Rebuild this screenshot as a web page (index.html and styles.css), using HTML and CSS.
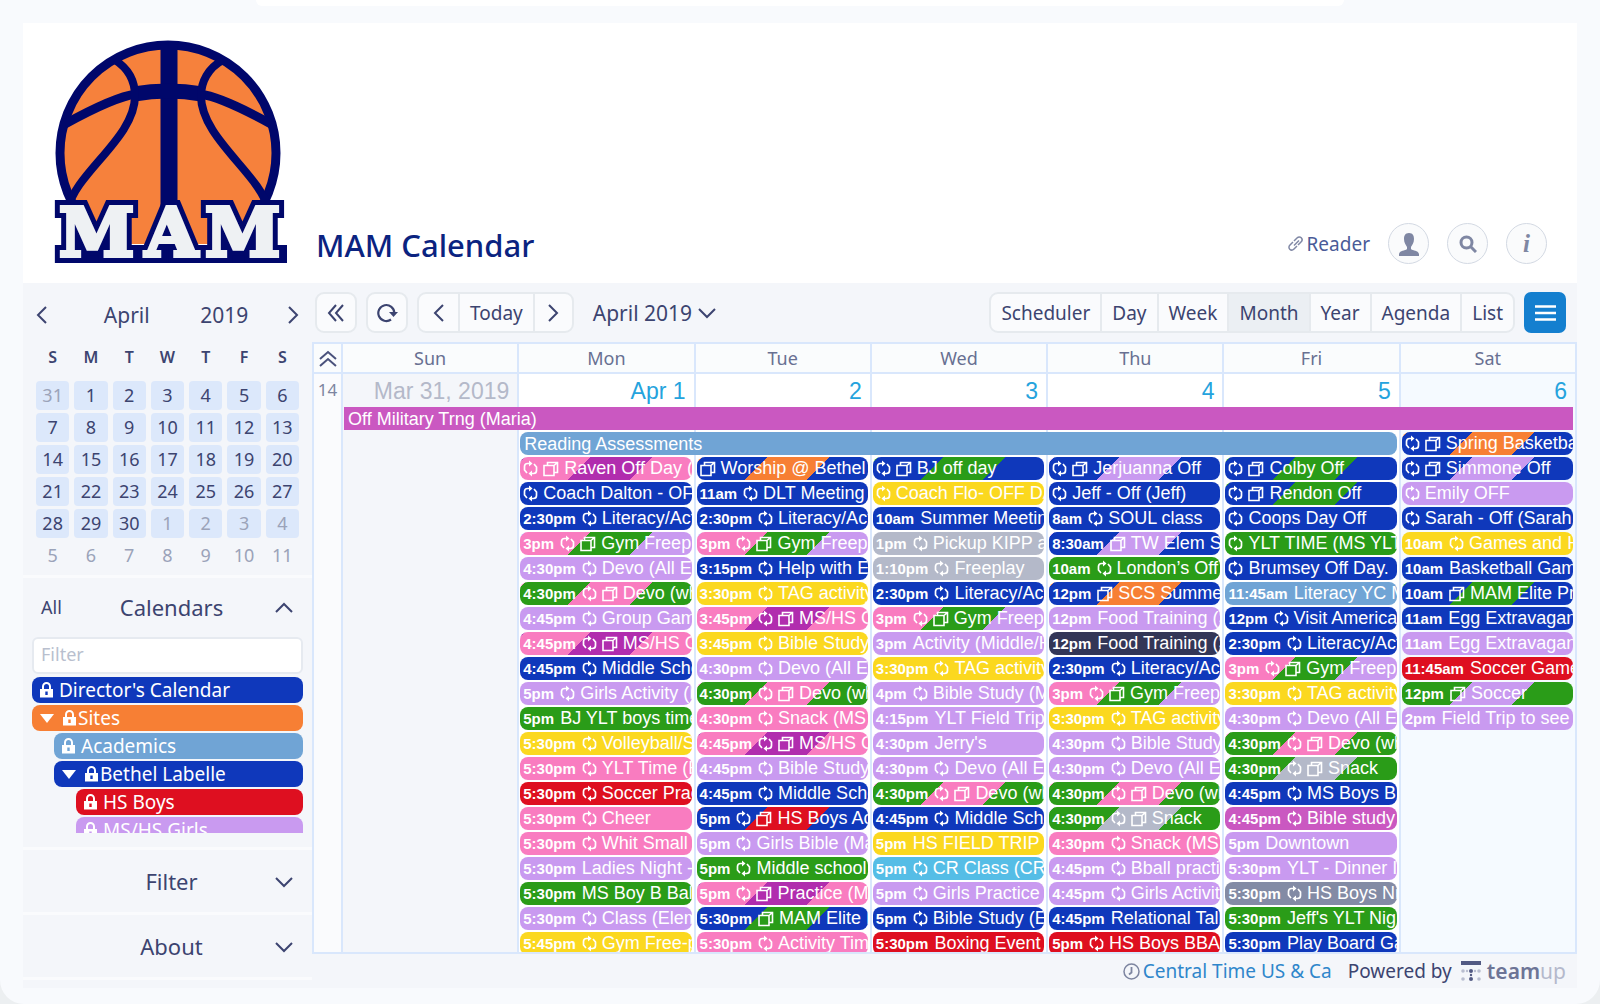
FILE: index.html
```html
<!DOCTYPE html>
<html lang="en">
<head>
  <meta charset="UTF-8" />
  <meta name="viewport" content="width=device-width, initial-scale=1.0"/>
  <title>MAM Calendar</title>
  <link rel="stylesheet" href="styles.css">
</head>
<body>
  <svg class="sprite" width="0" height="0" aria-hidden="true">
    <symbol id="left" viewBox="0 0 12 20"><path d="M10 2 2 10l8 8"/></symbol>
    <symbol id="right" viewBox="0 0 12 20"><path d="m2 2 8 8-8 8"/></symbol>
    <symbol id="down" viewBox="0 0 18 12"><path d="m1 2 8 8 8-8"/></symbol>
    <symbol id="up" viewBox="0 0 18 12"><path d="m1 10 8-8 8 8"/></symbol>
    <symbol id="lock" viewBox="0 0 13 16"><path fill="currentColor" stroke="none" fill-rule="evenodd" d="M0 7h13v8.5H0zM5.300 9.500v3.500h2.400v-3.500z"/><path d="M3 8V4.500a3.500 3.500 0 0 1 7 0V8" stroke-width="2"/></symbol>
    <symbol id="repeat" viewBox="0 0 15 17"><path d="M6.500 3.500H4.500Q1.500 3.500 1.500 6.500v3.500l2.500 3M8.500 13.500h2Q13.500 13.500 13.500 10.500V7L11 4" stroke-width="1.700"/><path fill="currentColor" stroke="none" d="M6 .5v6L9.500 3.500zM9 10.500v6l-3.500-3z"/></symbol>
    <symbol id="copy" viewBox="0 0 16 16"><path d="M1 4.500h10v10H1zM4.500 4.500v-3h10v10H11M11 4.500l3.500-3" stroke-width="1.600"/></symbol>
  </svg>

  <div class="strip"></div>
  <div class="panel">
    <header class="header">
      <svg class="logo" viewBox="0 0 234 226" role="img" aria-label="MAM">
        <defs>
          <clipPath id="ball"><path d="M0 0h234v206H0z"/></clipPath>
          <text id="mam" y="218"><tspan x="5">M</tspan><tspan x="91">A</tspan><tspan x="151">M</tspan></text>
        </defs>
        <g clip-path="url(#ball)" stroke="#00076b" fill="none">
          <circle cx="114" cy="115" r="108" fill="#f6813c" stroke-width="9"/>
          <path d="M115 6v170" stroke-width="17"/>
          <path d="M11 86Q60 59 82 56q32-6 64 0 22 3 71 30" stroke-width="9"/>
          <path d="M80 56q34-6 68 0" stroke-width="15"/>
          <path d="M61 22c14 9 20 22 20 36 0 42-60 77-67 113M169 22c-15 8-22 22-22 36 0 42 60 79 67 113" stroke-width="8"/>
        </g>
        <path d="M1 207h232v18H1z" fill="#00076b"/>
        <use class="logo-text logo-outline" href="#mam"/>
        <use class="logo-text" href="#mam"/>
      </svg>
      <h1>MAM Calendar</h1>
      <a class="reader" href="#"><svg class="icon" width="17" height="17" viewBox="0 0 17 17"><path d="m7 10.500 5-5M6 7 3 10c-3 3 1 7 4 4l3-3M7 6l3-3c3-3 7 1 4 4l-3 3" stroke-width="1.500"/></svg>Reader</a>
      <button class="round" aria-label="Account"><svg width="22" height="24" viewBox="0 0 22 24"><path fill="currentColor" d="M11 1c4 0 5 3 5 6 0 4-2 6-3 8v2c2 2 7 1 8 5v2H1v-2c1-4 6-3 8-5v-2c-1-2-3-4-3-8 0-3 1-6 5-6z"/></svg></button>
      <button class="round" aria-label="Search"><svg class="icon" width="18" height="18" viewBox="0 0 18 18"><circle cx="7.500" cy="7.500" r="5.500" stroke-width="3"/><path d="m12 12 5 5" stroke-width="3"/></svg></button>
      <button class="round info" aria-label="Information">i</button>
    </header>

    <div class="content">
      <aside class="sidebar">
        <section class="mini">
          <div class="mini-nav">
            <button aria-label="Previous month"><svg class="icon" width="12" height="20"><use href="#left"/></svg></button>
            <span class="mini-month">April</span>
            <span class="mini-year">2019</span>
            <button aria-label="Next month"><svg class="icon" width="12" height="20"><use href="#right"/></svg></button>
          </div>
          <table class="mini-table">
            <thead><tr><th>S</th><th>M</th><th>T</th><th>W</th><th>T</th><th>F</th><th>S</th></tr></thead>
            <tbody id="miniDays"></tbody>
          </table>
        </section>

        <section class="calendars">
          <div class="section-head">
            <button class="all">All</button>
            <h2>Calendars</h2>
            <button aria-label="Collapse calendars"><svg class="icon" width="18" height="12"><use href="#up"/></svg></button>
          </div>
          <input class="filter" type="text" placeholder="Filter" aria-label="Filter calendars">
          <ul class="cal-list">
            <li class="cal blue"><svg class="icon" width="13" height="16"><use href="#lock"/></svg><span>Director's Calendar</span></li>
            <li class="cal orange parent"><i class="caret"></i><svg class="icon" width="13" height="16"><use href="#lock"/></svg><span>Sites</span></li>
            <li class="cal sky level-1"><svg class="icon" width="13" height="16"><use href="#lock"/></svg><span>Academics</span></li>
            <li class="cal blue level-1 parent"><i class="caret"></i><svg class="icon" width="13" height="16"><use href="#lock"/></svg><span>Bethel Labelle</span></li>
            <li class="cal red level-2"><svg class="icon" width="13" height="16"><use href="#lock"/></svg><span>HS Boys</span></li>
            <li class="cal lilac level-2"><svg class="icon" width="13" height="16"><use href="#lock"/></svg><span>MS/HS Girls</span></li>
          </ul>
        </section>

        <section class="folded">
          <h2>Filter</h2>
          <button aria-label="Expand filter"><svg class="icon" width="18" height="12"><use href="#down"/></svg></button>
        </section>
        <section class="folded">
          <h2>About</h2>
          <button aria-label="Expand about"><svg class="icon" width="18" height="12"><use href="#down"/></svg></button>
        </section>
      </aside>

      <main class="main">
        <div class="toolbar">
          <button class="tool" aria-label="Hide sidebar"><svg class="icon" width="18" height="18" viewBox="0 0 18 18"><path d="M9 1 2 9l7 8M16 1 9 9l7 8"/></svg></button>
          <button class="tool" aria-label="Refresh"><svg class="icon" width="21" height="20" viewBox="0 0 21 20"><path d="M14 16.500A8 8 0 1 1 17.300 10" stroke-width="2.200"/><path d="M12 9h9l-4.500 5z" fill="currentColor" stroke="none"/></svg></button>
          <div class="group">
            <button class="arrow" aria-label="Previous"><svg class="icon" width="12" height="20"><use href="#left"/></svg></button>
            <button class="today">Today</button>
            <button class="arrow" aria-label="Next"><svg class="icon" width="12" height="20"><use href="#right"/></svg></button>
          </div>
          <button class="period">April 2019<svg class="icon" width="18" height="12"><use href="#down"/></svg></button>
          <div class="group views">
            <button>Scheduler</button>
            <button>Day</button>
            <button>Week</button>
            <button class="selected">Month</button>
            <button>Year</button>
            <button>Agenda</button>
            <button>List</button>
          </div>
          <button class="menu" aria-label="Menu"><svg width="21" height="16" viewBox="0 0 21 16"><path d="M0 1.500h21M0 8h21M0 14.500h21" stroke="#fff" stroke-width="2.500"/></svg></button>
        </div>

        <div class="month">
          <div class="row weekdays">
            <button class="fold" aria-label="Collapse"><svg class="icon" width="18" height="17" viewBox="0 0 18 17"><path d="m1 9 8-7 8 7M1 16l8-7 8 7"/></svg></button>
            <div>Sun</div><div>Mon</div><div>Tue</div><div>Wed</div><div>Thu</div><div>Fri</div><div>Sat</div>
          </div>
          <div class="row week" id="week">
            <div class="week-no">14</div>
            <div class="bar military">Off Military Trng (Maria)</div>
            <div class="bar reading">Reading Assessments</div>
          </div>
        </div>

        <footer class="footer">
          <a href="#"><svg class="icon zone" width="17" height="17" viewBox="0 0 17 17"><circle cx="8.500" cy="8.500" r="7.500" stroke-width="1.500"/><path d="M8.500 4v5.500l-2.500 2" stroke-width="1.800"/></svg>Central Time US &amp; Ca</a>
          <span>Powered by</span>
          <a class="teamup" href="#"><svg width="20" height="20" viewBox="0 0 20 20"><path d="M0 0h20v4H0z" fill="#525a83"/><g fill="#525a83"><circle cx="10" cy="10" r="2"/><circle cx="10" cy="18" r="2"/><circle cx="10" cy="14" r="1.200"/></g><g fill="#b9bed0"><circle cx="2" cy="10" r="1.800"/><circle cx="18" cy="10" r="1.800"/><circle cx="2" cy="18" r="1.800"/><circle cx="18" cy="18" r="1.800"/><circle cx="6" cy="10" r="1.200"/><circle cx="14" cy="10" r="1.200"/></g></svg>team<span>up</span></a>
        </footer>
      </main>
    </div>
  </div>

  <script src="script.js"></script>
</body>
</html>
```
FILE: styles.css
```css
* {
  box-sizing: border-box;
}

html {
  background-color: #eceff1;
}

body {
  display: flex;
  flex-direction: column;
  height: 100vh;
  margin: 0;
  padding: 0 23px 16px;
  border-radius: 0 0 24px 24px;
  background-color: #f8fafd;
  font-family: "Noto Sans", "Open Sans", sans-serif;
  font-size: 18px;
  color: #3c4470;
}

button {
  padding: 0;
  border: 0;
  background: none;
  font: inherit;
  color: inherit;
  cursor: pointer;
}

h1, h2, ul {
  margin: 0;
  padding: 0;
  font-weight: normal;
}

a {
  color: #2f86cb;
  text-decoration: none;
}

.sprite {
  position: absolute;
}

.icon {
  flex: none;
  fill: none;
  stroke: currentColor;
  stroke-width: 2;
}

.group .icon,
.mini-nav .icon {
  display: block;
  margin: auto;
}

.strip {
  flex: none;
  width: 70%;
  height: 6px;
  margin: 0 auto 17px;
  border-radius: 0 0 6px 6px;
  background-color: #fff;
}

.panel {
  flex: 1;
  display: flex;
  flex-direction: column;
  min-height: 0;
  background-color: #f4f6fa;
}

/* header */

.header {
  display: flex;
  align-items: flex-end;
  gap: 18px;
  padding: 15px 30px 19px 31px;
  background-color: #fff;
}

.logo {
  width: 234px;
  height: 226px;
  margin-right: 10px;
}

.logo-text {
  font-family: "DejaVu Serif", serif;
  font-weight: bold;
  font-size: 68px;
  fill: #eef1f3;
  stroke: #eef1f3;
  stroke-width: 4px;
}

.logo-outline {
  stroke: #00076b;
  stroke-width: 14px;
}

.header h1 {
  flex: 1;
  font-size: 31px;
  font-weight: 500;
  line-height: 38px;
  color: #0b2380;
}

.reader {
  display: flex;
  align-items: center;
  gap: 3px;
  height: 41px;
  font-size: 19px;
  color: #4a5b98;
}

.reader .icon {
  color: #8088a5;
}

.round {
  width: 41px;
  height: 41px;
  display: flex;
  align-items: center;
  justify-content: center;
  border: 1px solid #d3d9e3;
  border-radius: 50%;
  background-color: #fafbfc;
  color: #7f87a3;
}

.info {
  font-family: "Liberation Serif", serif;
  font-style: italic;
  font-weight: bold;
  font-size: 25px;
}

/* sidebar */

.content {
  flex: 1;
  display: flex;
  min-height: 0;
}

.sidebar {
  flex: none;
  width: 289px;
}

.sidebar section {
  border-bottom: 3px solid #fafbfd;
}

.mini {
  padding: 10px 8px 2px;
}

.mini-nav {
  display: flex;
  align-items: center;
  height: 44px;
  padding: 0 5px;
  font-size: 21px;
  text-align: center;
}

.mini-month {
  flex: 1;
  padding-left: 30px;
}

.mini-year {
  flex: 1;
  padding-right: 14px;
}

.mini-table {
  width: 100%;
  border-spacing: 5px 3px;
  table-layout: fixed;
  font-size: 18px;
  text-align: center;
}

.mini-table th {
  height: 38px;
  padding: 0 0 5px;
  font-size: 16px;
  font-weight: 600;
}

.mini-table td {
  height: 29px;
  padding: 0;
  line-height: 27px;
  border-radius: 4px;
}

.mini-table .current {
  background-color: #dce8fb;
}

.mini-table .other {
  color: #9ba3b9;
}

.calendars {
  padding: 8px 9px 14px;
}

.section-head {
  display: flex;
  align-items: center;
  height: 42px;
  margin-bottom: 9px;
  padding: 0 10px 0 9px;
}

.section-head h2 {
  flex: 1;
  padding-left: 7px;
  text-align: center;
}

.sidebar h2 {
  font-size: 22px;
}

.all {
  width: 20px;
}

.filter {
  display: block;
  width: 100%;
  height: 37px;
  padding: 0 7px 3px;
  border: 2px solid #e6eaf0;
  border-radius: 6px;
  background-color: #fff;
  font: inherit;
}

.filter::placeholder {
  color: #b9bfce;
}

.cal-list {
  height: 159px;
  padding-top: 3px;
  overflow: hidden;
  list-style: none;
  font-size: 19px;
}

.cal {
  display: flex;
  align-items: center;
  gap: 6px;
  height: 26px;
  margin-bottom: 2px;
  padding-left: 8px;
  border-radius: 8px;
  color: #fff;
}

.cal.parent {
  gap: 2px;
}

.level-1 {
  margin-left: 22px;
}

.level-2 {
  margin-left: 44px;
}

.caret {
  margin-right: 7px;
  border: 7px solid transparent;
  border-top: 9px solid #fff;
  border-bottom: 0;
}

.blue { background-color: #0f38bb; }
.orange { background-color: #f77f34; }
.sky { background-color: #70a4d5; }
.red { background-color: #de0f20; }
.lilac { background-color: #c99af0; }

.folded {
  display: flex;
  align-items: center;
  height: 65px;
  padding: 0 19px 0 9px;
}

.folded h2 {
  flex: 1;
  padding-left: 36px;
  text-align: center;
}

/* toolbar */

.main {
  flex: 1;
  display: flex;
  flex-direction: column;
  min-width: 0;
}

.toolbar {
  display: flex;
  gap: 9px;
  padding: 9px 11px 9px 3px;
  font-size: 19px;
}

.tool,
.group {
  display: flex;
  height: 41px;
  border: 2px solid #e6eaee;
  border-radius: 9px;
  background-color: #fafbfd;
  overflow: hidden;
}

.tool {
  width: 42px;
  align-items: center;
  justify-content: center;
}

.group button {
  padding: 0 10px;
  border-left: 2px solid #e6eaee;
}

.group button:first-child {
  border-left: 0;
}

.group .arrow {
  width: 39px;
}

.group .selected {
  background-color: #ebeff3;
}

.period {
  display: flex;
  align-items: center;
  gap: 6px;
  margin-left: 10px;
  font-size: 21px;
}

.views {
  margin-left: auto;
}

.menu {
  width: 42px;
  display: flex;
  align-items: center;
  justify-content: center;
  border-radius: 7px;
  background-color: #147fcf;
}

/* month grid */

.month {
  flex: 1;
  display: flex;
  flex-direction: column;
  min-height: 0;
  border: 2px solid #d9e7fc;
  border-left: 0;
  background-color: #fff;
  overflow: hidden;
}

.row {
  display: grid;
  grid-template-columns: 29px repeat(7, minmax(0, 1fr));
}

.weekdays {
  flex: none;
  height: 30px;
  border-bottom: 2px solid #d9e7fc;
  background-color: #fafcfd;
  line-height: 28px;
  text-align: center;
  color: #687092;
}

.weekdays > * {
  border-left: 2px solid #d9e7fc;
}

.fold {
  display: flex;
  align-items: center;
  justify-content: center;
  color: #4a527c;
}

.week {
  flex: 1;
  min-height: 0;
  grid-template-rows: 32px 25px 25px minmax(0, 1fr);
  font-family: "Liberation Sans", Arial, sans-serif;
}

.week-no {
  grid-row: 1 / -1;
  grid-column: 1;
  border-left: 2px solid #d9e7fc;
  background-color: #fafbfd;
  font-family: "Noto Sans", sans-serif;
  font-size: 17px;
  line-height: 32px;
  text-align: center;
  color: #7d85a0;
}

.day {
  grid-row: 1 / -1;
  padding-right: 8px;
  border-left: 2px solid #d9e7fc;
  font-size: 23px;
  line-height: 34px;
  text-align: right;
  color: #25a3dd;
}

.day.outside {
  background-color: #f4f6fa;
  color: #b4b9c9;
}

.day.weekend {
  background-color: #f5faff;
}

.bar,
.event {
  height: 23px;
  padding-left: 4px;
  line-height: 25px;
  white-space: nowrap;
  overflow: hidden;
  color: #fff;
  font-size: 18px;
}

.bar {
  z-index: 1;
  margin: 1px 2px 0 3px;
}

.military {
  grid-area: 2 / 2 / 3 / 9;
  background-color: #ca58c1;
}

.reading {
  grid-area: 3 / 3 / 4 / 8;
  border-radius: 8px;
  background-color: #70a4d5;
}

.events {
  z-index: 1;
  grid-row: 4;
  padding: 1px 2px 0 3px;
  overflow: hidden;
}

.events.early {
  grid-row: 3 / 5;
}

.event {
  display: flex;
  gap: 5px;
  align-items: center;
  margin-bottom: 2px;
  padding-left: 3px;
  border-radius: 8px;
}

.event b {
  margin-right: 1px;
  font-size: 15px;
}

/* footer */

.footer {
  flex: none;
  display: flex;
  align-items: center;
  justify-content: flex-end;
  gap: 16px;
  height: 34px;
  padding-right: 11px;
  font-size: 19px;
}

.footer a {
  display: flex;
  align-items: center;
  gap: 3px;
}

.zone {
  color: #7d85a0;
}

.footer .teamup {
  gap: 0;
  margin-left: -7px;
  font-size: 21px;
  font-weight: 600;
  color: #6d7496;
}

.teamup svg {
  margin-right: 6px;
}

.teamup span {
  font-weight: normal;
  color: #b4b9cc;
}
```
FILE: script.js
```js
const colors = {
  blue: '#0f38bb', pink: '#f97cc0', purple: '#b12dae', orange: '#f77f34',
  yellow: '#fbd81f', green: '#2a9c18', lilac: '#c99af0', red: '#de0f20',
  grey: '#b4b9c9', slate: '#838ba5', navy: '#333657', sky: '#70a4d5',
  cyan: '#55bde6', orchid: '#ca58c1'
};

// [colours, time, icons (r = repeat, c = copy), title]
const days = [
  { label: 'Mar 31, 2019', type: 'outside', events: [] },
  { label: 'Apr 1', events: [
    ['pink purple', '', 'rc', 'Raven Off Day (Raven)'],
    ['blue', '', 'r', 'Coach Dalton - OFF'],
    ['blue', '2:30pm', 'r', 'Literacy/Activity'],
    ['pink green lilac', '3pm', 'rc', 'Gym Freeplay'],
    ['lilac', '4:30pm', 'r', 'Devo (All Elem)'],
    ['green pink', '4:30pm', 'rc', 'Devo (whole)'],
    ['lilac', '4:45pm', 'r', 'Group Games'],
    ['pink purple', '4:45pm', 'rc', 'MS/HS Girls'],
    ['blue', '4:45pm', 'r', 'Middle School'],
    ['lilac', '5pm', 'r', 'Girls Activity (Elem)'],
    ['green', '5pm', '', 'BJ YLT boys time'],
    ['yellow', '5:30pm', 'r', 'Volleyball/Soccer'],
    ['pink', '5:30pm', 'r', 'YLT Time (Elem)'],
    ['red', '5:30pm', 'r', 'Soccer Practice'],
    ['pink', '5:30pm', 'r', 'Cheer'],
    ['pink', '5:30pm', 'r', 'Whit Small'],
    ['lilac', '5:30pm', '', 'Ladies Night - Out'],
    ['green', '5:30pm', '', 'MS Boy B Ball'],
    ['lilac', '5:30pm', 'r', 'Class (Elem)'],
    ['yellow', '5:45pm', 'r', 'Gym Free-play']
  ] },
  { label: '2', events: [
    ['blue orange', '', 'c', 'Worship @ Bethel'],
    ['blue', '11am', 'r', 'DLT Meeting'],
    ['blue', '2:30pm', 'r', 'Literacy/Activity'],
    ['pink green lilac', '3pm', 'rc', 'Gym Freeplay'],
    ['blue', '3:15pm', 'r', 'Help with Elem'],
    ['yellow', '3:30pm', 'r', 'TAG activity'],
    ['pink purple', '3:45pm', 'rc', 'MS/HS Girls'],
    ['yellow', '3:45pm', 'r', 'Bible Study'],
    ['lilac', '4:30pm', 'r', 'Devo (All Elem)'],
    ['green pink', '4:30pm', 'rc', 'Devo (whole)'],
    ['pink', '4:30pm', 'r', 'Snack (MS'],
    ['pink purple', '4:45pm', 'rc', 'MS/HS Girls'],
    ['lilac', '4:45pm', 'r', 'Bible Study'],
    ['blue', '4:45pm', 'r', 'Middle School'],
    ['blue red', '5pm', 'rc', 'HS Boys Activity'],
    ['lilac', '5pm', 'r', 'Girls Bible (Maria)'],
    ['green', '5pm', 'r', 'Middle school'],
    ['pink purple', '5pm', 'rc', 'Practice (MS)'],
    ['blue green', '5:30pm', 'c', 'MAM Elite Practice'],
    ['pink', '5:30pm', 'r', 'Activity Time']
  ] },
  { label: '3', events: [
    ['blue green', '', 'rc', 'BJ off day'],
    ['yellow', '', 'r', 'Coach Flo- OFF DAY'],
    ['blue', '10am', '', 'Summer Meeting'],
    ['grey', '1pm', 'r', 'Pickup KIPP at'],
    ['grey', '1:10pm', 'r', 'Freeplay'],
    ['blue', '2:30pm', 'r', 'Literacy/Activity'],
    ['pink green lilac', '3pm', 'rc', 'Gym Freeplay'],
    ['lilac', '3pm', '', 'Activity (Middle/High)'],
    ['yellow', '3:30pm', 'r', 'TAG activity'],
    ['lilac', '4pm', 'r', 'Bible Study (MS)'],
    ['lilac', '4:15pm', '', 'YLT Field Trip'],
    ['lilac', '4:30pm', '', "Jerry's"],
    ['lilac', '4:30pm', 'r', 'Devo (All Elem)'],
    ['green pink', '4:30pm', 'rc', 'Devo (whole)'],
    ['blue', '4:45pm', 'r', 'Middle School'],
    ['yellow', '5pm', '', 'HS FIELD TRIP'],
    ['cyan', '5pm', 'r', 'CR Class (CR)'],
    ['lilac', '5pm', 'r', 'Girls Practice'],
    ['blue', '5pm', 'r', 'Bible Study (Elem)'],
    ['red', '5:30pm', '', 'Boxing Event']
  ] },
  { label: '4', events: [
    ['blue lilac', '', 'rc', 'Jerjuanna Off'],
    ['blue', '', 'r', 'Jeff - Off (Jeff)'],
    ['blue', '8am', 'r', 'SOUL class'],
    ['blue lilac', '8:30am', 'c', 'TW Elem Staff'],
    ['green', '10am', 'r', 'London’s Off'],
    ['blue orange', '12pm', 'c', 'SCS Summer'],
    ['lilac', '12pm', '', 'Food Training (Site)'],
    ['navy', '12pm', '', 'Food Training (Site)'],
    ['blue', '2:30pm', 'r', 'Literacy/Activity'],
    ['pink green lilac', '3pm', 'rc', 'Gym Freeplay'],
    ['yellow', '3:30pm', 'r', 'TAG activity'],
    ['lilac', '4:30pm', 'r', 'Bible Study'],
    ['lilac', '4:30pm', 'r', 'Devo (All Elem)'],
    ['green pink', '4:30pm', 'rc', 'Devo (whole)'],
    ['green grey', '4:30pm', 'rc', 'Snack'],
    ['pink', '4:30pm', 'r', 'Snack (MS'],
    ['lilac', '4:45pm', 'r', 'Bball practice'],
    ['lilac', '4:45pm', 'r', 'Girls Activity'],
    ['blue', '4:45pm', '', 'Relational Talks'],
    ['red', '5pm', 'r', 'HS Boys BBALL']
  ] },
  { label: '5', events: [
    ['blue green', '', 'rc', 'Colby Off'],
    ['blue green', '', 'rc', 'Rendon Off'],
    ['blue', '', 'r', 'Coops Day Off'],
    ['green', '', 'r', 'YLT TIME (MS YLT)'],
    ['blue', '', 'r', 'Brumsey Off Day.'],
    ['sky', '11:45am', '', 'Literacy YC Meeting'],
    ['blue', '12pm', 'r', 'Visit American'],
    ['blue', '2:30pm', 'r', 'Literacy/Activity'],
    ['pink green lilac', '3pm', 'rc', 'Gym Freeplay'],
    ['yellow', '3:30pm', 'r', 'TAG activity'],
    ['lilac', '4:30pm', 'r', 'Devo (All Elem)'],
    ['green pink', '4:30pm', 'rc', 'Devo (whole)'],
    ['green grey', '4:30pm', 'rc', 'Snack'],
    ['blue', '4:45pm', 'r', 'MS Boys Bible'],
    ['orchid', '4:45pm', 'r', 'Bible study'],
    ['lilac', '5pm', '', 'Downtown'],
    ['lilac', '5:30pm', '', 'YLT - Dinner In'],
    ['slate', '5:30pm', 'r', 'HS Boys Night'],
    ['green', '5:30pm', '', "Jeff's YLT Night"],
    ['blue', '5:30pm', '', 'Play Board Games']
  ] },
  { label: '6', type: 'weekend', events: [
    ['blue orange', '', 'rc', 'Spring Basketball'],
    ['blue lilac', '', 'rc', 'Simmone Off'],
    ['lilac', '', 'r', 'Emily OFF'],
    ['blue', '', 'r', 'Sarah - Off (Sarah)'],
    ['yellow', '10am', 'r', 'Games and Hangout'],
    ['blue', '10am', '', 'Basketball Games'],
    ['blue green', '10am', 'c', 'MAM Elite Practice'],
    ['blue', '11am', '', 'Egg Extravaganza'],
    ['lilac', '11am', '', 'Egg Extravaganza'],
    ['red', '11:45am', '', 'Soccer Games'],
    ['green lilac', '12pm', 'c', 'Soccer'],
    ['lilac', '2pm', '', 'Field Trip to see']
  ] }
];

// one colour fills the event, several are drawn as diagonal stripes
function background(names) {
  const [a, b, c] = names.split(' ').map(name => colors[name]);
  if (!b) return a;
  return `linear-gradient(135deg, ${c || b} 4px, ${a} 4px 50px, ${b} 50px 94px, ${c || a} 94px)`;
}

const icons = {
  r: '<svg class="icon" width="15" height="17"><use href="#repeat"/></svg>',
  c: '<svg class="icon" width="16" height="16"><use href="#copy"/></svg>'
};

const week = document.getElementById('week');

days.forEach((day, i) => {
  const column = i + 2;
  const events = day.events.map(([names, time, marks, title]) => `
    <div class="event" style="background: ${background(names)}">
      ${time ? `<b>${time}</b>` : ''}${[...marks].map(m => icons[m]).join('')}<span>${title}</span>
    </div>`).join('');

  week.insertAdjacentHTML('beforeend', `
    <div class="day ${day.type || ''}" style="grid-column: ${column}">${day.label}</div>
    <div class="events ${day.type === 'weekend' ? 'early' : ''}" style="grid-column: ${column}">${events}</div>`);
});

// mini month: Sunday March 31 to Saturday May 11
let rows = '';
for (let r = 0; r < 6; r++) {
  rows += '<tr>';
  for (let c = 0; c < 7; c++) {
    const date = new Date(2019, 2, 31 + r * 7 + c);
    const other = date.getMonth() !== 3 ? 'other' : '';
    rows += `<td class="${other} ${r < 5 ? 'current' : ''}">${date.getDate()}</td>`;
  }
  rows += '</tr>';
}
document.getElementById('miniDays').innerHTML = rows;
```
